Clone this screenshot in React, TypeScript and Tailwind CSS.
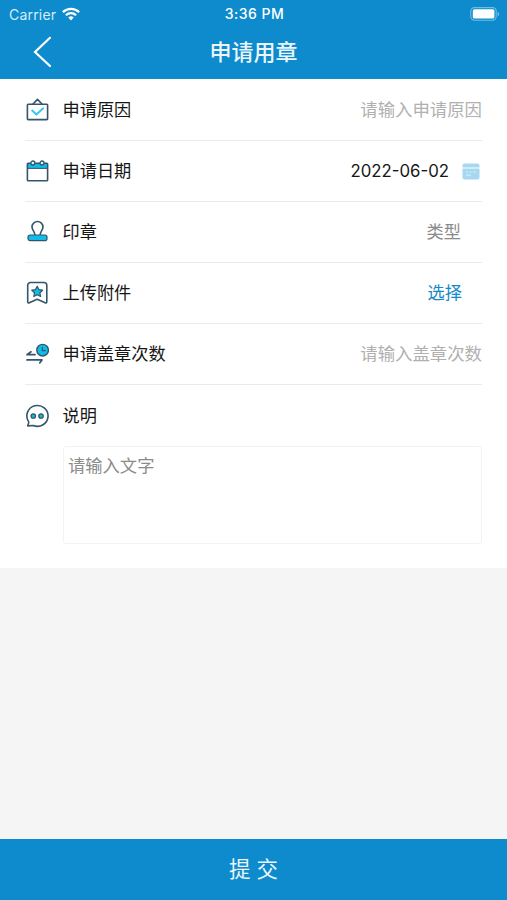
import type { ReactNode } from "react";

const NAVY = "#34566b";
const CYAN = "#10bce8";

function Icon({ children }: { children: ReactNode }) {
  return (
    <svg
      className="mr-[13.5px] h-6 w-6 shrink-0"
      viewBox="0 0 24 24"
      fill="none"
      stroke={NAVY}
      strokeWidth="1.6"
      strokeLinecap="round"
      strokeLinejoin="round"
    >
      {children}
    </svg>
  );
}

const ReasonIcon = () => (
  <Icon>
    <rect x="2.4" y="6.2" width="20.2" height="15.4" rx="0.8" />
    <path d="M8 6 12.5 1.4 17 6" />
    <path d="m7.2 12.6 4.2 3.8 6.6-6" stroke="#35c9f0" strokeWidth="2" />
  </Icon>
);

const DateIcon = () => (
  <Icon>
    <path d="M2.5 4.2h20v5h-20z" fill={CYAN} stroke="none" />
    <rect x="2.4" y="4.2" width="20.2" height="17.6" rx="0.8" />
    <path d="M2.5 9.4h20" strokeWidth="1" />
    <circle cx="7.9" cy="4" r="2" fill="#d9f3fb" strokeWidth="1.3" />
    <circle cx="17" cy="4" r="2" fill="#d9f3fb" strokeWidth="1.3" />
  </Icon>
);

const StampIcon = () => (
  <Icon>
    <path d="M9.8 15c.3-3.4-2.8-4.6-2.8-8a5.5 5.5 0 0 1 11 0c0 3.4-3.1 4.6-2.8 8" />
    <rect x="3" y="15" width="19" height="5.6" rx="2.2" fill={CYAN} strokeWidth="1.2" />
  </Icon>
);

const AttachmentIcon = () => (
  <Icon>
    <path d="M5.5 1.5H19a2.8 2.8 0 0 1 2.8 2.8v16.5q0 1.7-1.6 1l-8-3.6-7.9 3.6q-1.600.7-1.600-1V4.300a2.800 2.800 0 0 1 2.800-2.800z" />
    <path
      d="m12.200 5.300 1.700 3.300 3.700.6-2.700 2.600.7 3.700-3.400-1.800-3.400 1.800.7-3.700-2.700-2.600 3.700-.6z"
      fill={CYAN}
      strokeWidth="1.2"
    />
  </Icon>
);

const CountIcon = () => (
  <Icon>
    <path d="M2 12.7h8M2 12.7l4-2.900M2 17.900h15l-2.300 3" strokeWidth="1.7" />
    <circle cx="17.6" cy="8.2" r="5.8" fill={CYAN} strokeWidth="1.4" />
    <path d="M17.4 5.400v3.200h2.900" strokeWidth="1.400" />
  </Icon>
);

const NoteIcon = () => (
  <Icon>
    <path d="M3.6 17.6A10.6 10.4 0 1 1 8.4 21.5l-5.600.4c-.5-.5 1.400-2.200.8-4.300z" />
    <circle cx="8.3" cy="12" r="2.2" fill={CYAN} strokeWidth="1.3" />
    <circle cx="16" cy="12" r="2.2" fill={CYAN} strokeWidth="1.3" />
  </Icon>
);

function Row({ icon, label, children }: { icon: ReactNode; label: string; children: ReactNode }) {
  return (
    <div className="flex h-[61px] items-center border-b border-[#ebebeb] text-[17.2px]">
      {icon}
      <span className="text-[#161616]">{label}</span>
      <div className="ml-auto flex items-center">{children}</div>
    </div>
  );
}

function StatusBar() {
  return (
    <div className="grid h-7 grid-cols-3 items-center pl-[9px] pr-[7px] font-['Inter','Liberation_Sans',sans-serif]">
      <div className="flex items-center gap-[6px]">
        <span className="text-[14px] tracking-[0.2px] text-[#d7edf8]">Carrier</span>
        <svg className="-mt-px h-[14px] w-[18px]" viewBox="0 0 18 14" fill="none" stroke="#fff" strokeWidth="2.3">
          <path d="M.9 5.1a11.6 11.6 0 0 1 16.2 0M3.9 8.3a7.3 7.3 0 0 1 10.2 0" />
          <path d="m9 13.4-2.7-2.9a3.8 3.8 0 0 1 5.4 0z" fill="#fff" stroke="none" />
        </svg>
      </div>
      <span className="-mt-px text-center text-[14px] font-medium tracking-[0.5px] text-white">3:36 PM</span>
      <svg className="-mt-px ml-auto h-[14px] w-[30px]" viewBox="0 0 30 14">
        <rect x=".8" y=".6" width="25.4" height="12.6" rx="3.6" fill="none" stroke="#72bde2" strokeWidth="1.1" />
        <rect x="2.8" y="2.2" width="21.6" height="9.4" rx="1.6" fill="#fff" />
        <path d="M27.6 4.7c2 .7 2 3.9 0 4.6z" fill="#72bde2" />
      </svg>
    </div>
  );
}

export default function App() {
  return (
    <div className="flex h-[900px] w-[507px] flex-col bg-[#f5f5f5] font-['Inter','Noto_Sans_CJK_SC',sans-serif]">
      <header className="h-[79px] bg-[#0d8bcd]">
        <StatusBar />
        <div className="grid h-[48px] grid-cols-[1fr_auto_1fr] items-center">
          <svg
            className="ml-[33px] h-8 w-5"
            viewBox="0 0 20 32"
            fill="none"
            stroke="#fff"
            strokeWidth="2.2"
            strokeLinecap="round"
          >
            <path d="M17 1.8 2 16l15 14" />
          </svg>
          <h1 className="text-[22px] font-medium text-[#eaf6fc]">申请用章</h1>
        </div>
      </header>

      <main className="h-[489px] bg-white pl-[25px] pr-[25px] pt-[1px]">
        <Row icon={<ReasonIcon />} label="申请原因">
          <span className="text-[17.4px] text-[#b0b0b0]">请输入申请原因</span>
        </Row>
        <Row icon={<DateIcon />} label="申请日期">
          <span className="mt-[2px] text-[16.8px] text-[#161616]">2022-06-02</span>
          <svg className="ml-[13px] mr-[2px] h-[17px] w-[18px]" viewBox="0 0 18 17">
            <path d="M2.5.6h13q2 0 2 2v2H.5v-2q0-2 2-2zM.5 5.6h17v9q0 1.9-1.9 1.9H2.4Q.5 16.5.5 14.6z" fill="#a6d8f2" />
            <path d="M4 9h2M7.5 9h2M11 9h3M4 12.2h5" stroke="#d7effa" />
          </svg>
        </Row>
        <Row icon={<StampIcon />} label="印章">
          <span className="mr-[21px] text-[#8b8b8b]">类型</span>
        </Row>
        <Row icon={<AttachmentIcon />} label="上传附件">
          <span className="mr-5 text-[#1689c7]">选择</span>
        </Row>
        <Row icon={<CountIcon />} label="申请盖章次数">
          <span className="text-[17.4px] text-[#b0b0b0]">请输入盖章次数</span>
        </Row>
        <div className="flex h-[61px] items-center text-[17.2px] text-[#161616]">
          <NoteIcon />
          <span>说明</span>
        </div>
        <div className="ml-[38px] h-[98px] rounded-[3px] border border-[#f3f3f3] px-[4px] pt-[6px] text-[17.3px] leading-[26px] text-[#8b8b8b]">
          请输入文字
        </div>
      </main>

      <footer className="mt-auto flex h-[61px] items-center justify-center bg-[#0d8bcd]">
        <span className="text-[21.5px] text-[#eaf6fc]">提 交</span>
      </footer>
    </div>
  );
}
